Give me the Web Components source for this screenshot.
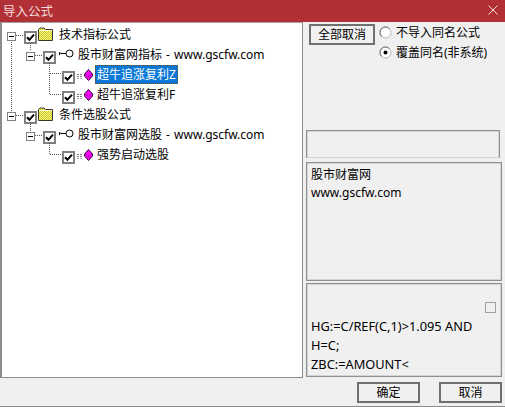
<!DOCTYPE html>
<html>
<head>
<meta charset="utf-8">
<style>
html, body { margin: 0; padding: 0; background: #f0f0f0; }
body { font: 12px "Noto Sans", "Noto Sans CJK SC", sans-serif; color: #000; }
</style>
</head>
<body>
<import-dialog></import-dialog>

<template id="btn-tpl">
    <style>
        :host {
            display: flex;
            align-items: center;
            justify-content: center;
            box-sizing: border-box;
            height: 21px;
            width: 63px;
            border: 2px solid #6f6f6f;
            background: #f0f0f0;
            font-size: 12px;
            line-height: 17px;
        }
    </style>
    <slot></slot>
</template>

<template id="radio-tpl">
    <style>
        :host {
            display: flex;
            align-items: center;
            gap: 4px;
            height: 20px;
            margin-left: -1px;
            font-size: 12px;
            white-space: nowrap;
        }
        svg { display: block; flex: none; }
    </style>
    <svg width="13" height="13" viewBox="0 0 13 13">
        <circle cx="6.5" cy="6.5" r="5.5" fill="#fff" stroke="#b4b4b4"/>
        <path d="M2.6 10.4a5.5 5.5 0 0 1 7.8-7.8" fill="none" stroke="#696969"/>
        <circle id="dot" cx="6.5" cy="6.5" r="2" fill="#000"/>
    </svg>
    <span><slot></slot></span>
</template>

<template id="pane-tpl">
    <style>
        :host {
            display: block;
            box-sizing: border-box;
            border: 1px solid #8f8f8f;
            box-shadow: inset 0 0 0 1px #d4d4d4;
            background: #f0f0f0;
            font-size: 12px;
            line-height: 18px;
            padding: 3px 4px;
            position: relative;
        }
    </style>
    <slot></slot>
</template>

<template id="row-tpl">
    <style>
        :host {
            display: flex;
            align-items: center;
            height: 20px;
            white-space: nowrap;
            font-size: 12px;
        }
        svg { display: block; flex: none; }
        .exp { width: 9px; height: 9px; box-sizing: border-box; border: 1px solid #808080; margin-right: 8px; background: #fff; position: relative; }
        .exp::after { content: ""; position: absolute; left: 1px; top: 3px; width: 5px; height: 1px; background: #000; }
        .exp.none { visibility: hidden; }
        .check { width: 13px; height: 13px; box-sizing: border-box; border: 2px solid #808080; background: #fff; margin-top: 2px; margin-right: 1px; }
        .icon { display: flex; align-items: center; }
        .label { margin-top: -4px; padding: 0 2px; line-height: 19px; height: 19px; word-spacing: 1px; }
        :host([selected]) .label { background: #0a78d7; color: #fff; outline: 1px dotted #7a4a10; outline-offset: -1px; }
    </style>
    <div class="exp"></div>
    <div class="check">
        <svg width="9" height="9" viewBox="0 0 9 9"><path d="M1 4.2 3.4 6.8 8 1.6" fill="none" stroke="#000" stroke-width="2"/></svg>
    </div>
    <div class="icon"></div>
    <div class="label"><slot></slot></div>
</template>

<template id="tree-tpl">
    <style>
        :host {
            display: block;
            box-sizing: border-box;
            position: relative;
            width: 303px;
            height: 356px;
            background: #fff;
            border: 1px solid #8c8c8c;
            border-top-color: #a0a0a0;
            border-left-width: 2px;
            padding: 3px 0 0 5px;
        }
        .lines { position: absolute; left: 0; top: 0; pointer-events: none; }
    </style>
    <svg class="lines" width="120" height="180" fill="none" stroke="#555" stroke-dasharray="1 1" shape-rendering="crispEdges">
        <path d="M9.5 17V88M14 12.5H22"/>
        <path d="M28.5 20V28M33 32.5H41"/>
        <path d="M47.5 40V71M47.5 50.500H60M47.5 71.500H60"/>
        <path d="M28.5 99V108M33 112.500H41M14 92.500H22"/>
        <path d="M47.5 120V131.500H60"/>
    </svg>
    <slot></slot>
</template>

<template id="dialog-tpl">
    <style>
        :host {
            display: block;
            width: 505px;
            height: 407px;
            background: #f0f0f0;
            box-sizing: border-box;
            overflow: hidden;
            border-bottom: 1px solid #8c8c8c;
            font-family: "Noto Sans", "Noto Sans CJK SC", sans-serif;
        }
        .title {
            height: 22px;
            background: #b03035;
            color: #f4dcdc;
            font-size: 12.5px;
            display: flex;
            align-items: center;
            justify-content: space-between;
            padding: 0 7px 2px 3px;
            box-sizing: border-box;
        }
        .close { display: block; }
        .body { display: flex; height: 356px; padding-left: 0; }
        .side { margin-left: 3px; width: 196px; display: flex; flex-direction: column; }
        .top { display: flex; height: 108px; padding: 2px 0 0 3px; gap: 5px; box-sizing: border-box; }
        .radios { display: flex; flex-direction: column; margin-top: -2px; }
        .blank { height: 28px; width: 194px; border-bottom-width: 0; }
        .info { height: 119px; margin-top: 4px; }
        .code { height: 94px; margin-top: 2px; padding-top: 33px; font-size: 12.8px; line-height: 19px; }
        .tick { position: absolute; right: 5px; top: 18px; width: 9px; height: 9px; border: 1px solid #a0a0a0; background: #f0f0f0; }
        .foot { display: flex; justify-content: flex-end; gap: 19px; padding: 4px 3px 0 0; }
    </style>
    <div class="title">
        <span>导入公式</span>
        <svg class="close" width="10" height="10" viewBox="0 0 10 10"><path d="M.5.5l9 9M9.500.5l-9 9" stroke="#f4dcdc" fill="none"/></svg>
    </div>
    <div class="body">
        <tree-view>
            <tree-row level="0" icon="folder">技术指标公式</tree-row>
            <tree-row level="1" icon="key">股市财富网指标 - www.gscfw.com</tree-row>
            <tree-row level="2" icon="gem" selected>超牛追涨复利Z</tree-row>
            <tree-row level="2" icon="gem">超牛追涨复利F</tree-row>
            <tree-row level="0" icon="folder">条件选股公式</tree-row>
            <tree-row level="1" icon="key">股市财富网选股 - www.gscfw.com</tree-row>
            <tree-row level="2" icon="gem">强势启动选股</tree-row>
        </tree-view>
        <div class="side">
            <div class="top">
                <win-button style="width:66px">全部取消</win-button>
                <div class="radios">
                    <win-radio>不导入同名公式</win-radio>
                    <win-radio checked>覆盖同名(非系统)</win-radio>
                </div>
            </div>
            <text-pane class="blank"></text-pane>
            <text-pane class="info">股市财富网<br>www.gscfw.com</text-pane>
            <text-pane class="code">
                <div class="tick"></div>
                HG:=C/REF(C,1)&gt;1.095 AND<br>H=C;<br>ZBC:=AMOUNT&lt;
            </text-pane>
        </div>
    </div>
    <div class="foot">
        <win-button>确定</win-button>
        <win-button>取消</win-button>
    </div>
</template>

<script>
const icons = {
    folder: `<svg width="16" height="14" viewBox="0 0 16 14" style="margin:-5px 3px 0 0">
        <defs><pattern id="dither" width="2" height="2" patternUnits="userSpaceOnUse">
            <rect width="2" height="2" fill="#ffff66"/><rect width="1" height="1" fill="#c8c040"/><rect x="1" y="1" width="1" height="1" fill="#c8c040"/>
        </pattern></defs>
        <path d="M.5 13.500V2.500L2 1h4l1.500 1.500h7v11z" fill="url(#dither)" stroke="#3a3a20"/>
        <path d="M1.500 3.500h12.500" stroke="#fffbe0"/><path d="M14.500 4v9" stroke="#333"/></svg>`,
    key: `<svg width="16" height="9" viewBox="0 0 16 9" style="margin:-6px 2px 0 1px">
        <circle cx="11.500" cy="4.500" r="3.500" fill="#fff" stroke="#000"/>
        <path d="M8 4.500H3L1.500 3.500M1.500 3.500V6" fill="none" stroke="#000"/></svg>`,
    gem: `<svg width="16" height="12" viewBox="0 0 16 12" style="margin:-3px 2px 0 1px">
        <path d="M0 5.500H6M0 7.500H6" stroke="#777" stroke-dasharray="2 1"/>
        <path d="M0 9.500H5" stroke="#aaa" stroke-dasharray="2 1"/>
        <path d="M11.500.5 15.500 5V7L11.500 11.500 7.500 7V5z" fill="#f0f" stroke="#300830"/>
        <path d="M8.500 5 11.500 7.500 14.500 5" fill="none" stroke="#8a1090"/></svg>`
}

class WinButton extends HTMLElement {
    constructor() {
        super()
        this.attachShadow({ mode: "open" })
        this.shadowRoot.appendChild(document.getElementById("btn-tpl").content.cloneNode(true))
    }
}

class WinRadio extends HTMLElement {
    constructor() {
        super()
        this.attachShadow({ mode: "open" })
        this.shadowRoot.appendChild(document.getElementById("radio-tpl").content.cloneNode(true))
    }
    connectedCallback() {
        this.shadowRoot.getElementById("dot").style.display = this.hasAttribute("checked") ? "" : "none"
    }
}

class TextPane extends HTMLElement {
    constructor() {
        super()
        this.attachShadow({ mode: "open" })
        this.shadowRoot.appendChild(document.getElementById("pane-tpl").content.cloneNode(true))
    }
}

class TreeRow extends HTMLElement {
    constructor() {
        super()
        this.attachShadow({ mode: "open" })
        this.shadowRoot.appendChild(document.getElementById("row-tpl").content.cloneNode(true))
    }
    connectedCallback() {
        const level = parseInt(this.getAttribute("level"))
        this.style.paddingLeft = `${level * 19}px`
        if (level == 2) {
            // leaves have no expander, the box just keeps its place
            this.shadowRoot.querySelector(".exp").classList.add("none")
        }
        this.shadowRoot.querySelector(".icon").innerHTML = icons[this.getAttribute("icon")]
    }
}

class TreeView extends HTMLElement {
    constructor() {
        super()
        this.attachShadow({ mode: "open" })
        this.shadowRoot.appendChild(document.getElementById("tree-tpl").content.cloneNode(true))
    }
}

class ImportDialog extends HTMLElement {
    constructor() {
        super()
        this.attachShadow({ mode: "open" })
        this.shadowRoot.appendChild(document.getElementById("dialog-tpl").content.cloneNode(true))
    }
}

customElements.define("win-button", WinButton)
customElements.define("win-radio", WinRadio)
customElements.define("text-pane", TextPane)
customElements.define("tree-row", TreeRow)
customElements.define("tree-view", TreeView)
customElements.define("import-dialog", ImportDialog)
</script>
</body>
</html>
